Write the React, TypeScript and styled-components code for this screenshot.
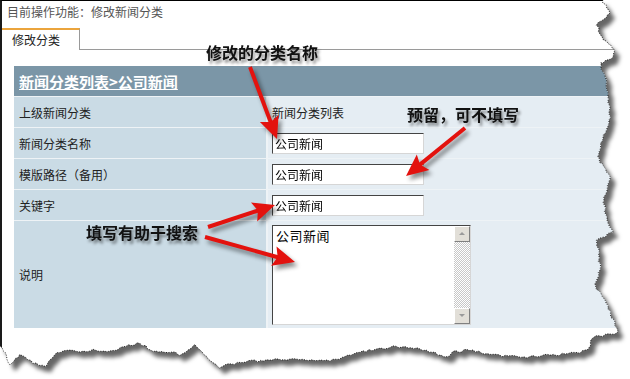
import styled, { createGlobalStyle } from "styled-components";

const GlobalStyle = createGlobalStyle`
  html, body {
    margin: 0;
    padding: 0;
    background: #fff;
  }
  body {
    width: 630px;
    height: 379px;
    overflow: hidden;
    font-family: "Noto Sans CJK SC", "Noto Sans", sans-serif;
  }
`;

// rough outline of the torn right and bottom edges
const TEAR: [number, number][] = [
  [602, 0], [610, 13], [597, 25], [602, 37], [615, 50], [613, 57], [600, 63],
  [605, 77], [608, 90], [610, 117], [604, 135], [597, 157], [603, 167],
  [610, 177], [603, 200], [607, 223], [613, 232], [597, 240], [600, 270],
  [595, 287], [607, 303], [613, 320], [618, 333], [593, 337], [588, 350],
  [577, 353], [527, 357], [493, 355], [467, 350], [453, 352], [447, 357],
  [417, 348], [393, 347], [360, 352], [330, 361], [290, 359], [240, 362],
  [220, 367], [213, 363], [200, 350], [195, 345], [180, 355], [173, 352],
  [153, 352], [140, 343], [123, 347], [110, 352], [90, 350], [80, 353],
  [67, 350], [57, 353], [45, 367], [33, 363], [20, 355], [10, 365],
  [5, 353], [0, 346],
];

function roughen(pts: [number, number][]) {
  const out: [number, number][] = [];
  let k = 0;
  for (let i = 0; i < pts.length - 1; i++) {
    const [x1, y1] = pts[i];
    const [x2, y2] = pts[i + 1];
    const steps = Math.max(1, Math.round(Math.hypot(x2 - x1, y2 - y1) / 3));
    for (let s = 0; s < steps; s++) {
      const t = s / steps;
      const n = Math.sin(k * 12.9898) * 43758.5453;
      const j = (n - Math.floor(n) - 0.5) * 2.4;
      const dx = x2 - x1;
      const dy = y2 - y1;
      const len = Math.hypot(dx, dy) || 1;
      out.push([x1 + dx * t + (-dy / len) * j, y1 + dy * t + (dx / len) * j]);
      k++;
    }
  }
  out.push(pts[pts.length - 1]);
  return out;
}

const EDGE = roughen(TEAR);
const CLIP = `polygon(0px 0px, ${EDGE.map(([x, y]) => `${x.toFixed(1)}px ${y.toFixed(1)}px`).join(", ")})`;
const EDGE_LINE = EDGE.map(([x, y]) => `${x.toFixed(1)},${y.toFixed(1)}`).join(" ");

const Stage = styled.div`
  position: relative;
  width: 630px;
  height: 379px;
`;

const ShadowWrap = styled.div`
  filter: drop-shadow(5px 6px 2px rgba(0, 0, 0, 0.6));
`;

const Paper = styled.div`
  width: 630px;
  height: 379px;
  box-sizing: border-box;
  background: #fff;
  border-top: 1px solid #000;
  border-left: 2px solid #1a1a1a;
  clip-path: ${CLIP};
`;

const Title = styled.div`
  padding: 5px 0 0 5px;
  height: 22px;
  box-sizing: border-box;
  font-size: 12px;
  line-height: 12px;
  color: #555;
`;

const TabBar = styled.div`
  display: flex;
  align-items: stretch;
  margin-top: 5px;
  height: 22px;
`;

const Tab = styled.div`
  width: 78px;
  box-sizing: border-box;
  border-top: 2px solid #eba43c;
  border-right: 1px solid #999;
  padding-left: 10px;
  font-size: 12px;
  line-height: 19px;
  color: #222;
`;

const TabFill = styled.div`
  flex: 1;
  border-bottom: 1px solid #9a9a9a;
`;

const Table = styled.div`
  display: grid;
  grid-template-columns: 252px 1fr;
  grid-template-rows: 30px repeat(4, 30px) 107px;
  column-gap: 2px;
  row-gap: 1px;
  width: 604px;
  margin: 16px 0 0 12px;
  background: #eef3f6;
`;

const Header = styled.div`
  grid-column: 1 / span 2;
  background: #7b96a7;
  padding-left: 5px;
  display: flex;
  align-items: center;
  font-size: 15px;
  font-weight: bold;
  color: #fff;
  text-decoration: underline;
`;

const Label = styled.div`
  background: #cadbe5;
  padding-left: 5px;
  display: flex;
  align-items: center;
  font-size: 12px;
  color: #222;
`;

const Value = styled.div`
  background: #e5edf3;
  padding-left: 4px;
  display: flex;
  align-items: center;
  font-size: 12px;
  color: #222;
`;

const Input = styled.input`
  width: 152px;
  height: 21px;
  box-sizing: border-box;
  margin: 0;
  padding: 1px 2px 0;
  border: 1px solid;
  border-color: #444 #d6d6d6 #d6d6d6 #444;
  background: #fff;
  font-family: "Noto Sans CJK SC", sans-serif;
  font-size: 12px;
  color: #000;
  outline: none;
`;

const TextBox = styled.div`
  display: flex;
  width: 199px;
  height: 100px;
  box-sizing: border-box;
  border: 1px solid;
  border-color: #444 #d6d6d6 #d6d6d6 #444;
  background: #fff;
`;

const TextContent = styled.div`
  flex: 1;
  padding: 2px 3px;
  font-size: 13px;
  line-height: 16px;
  letter-spacing: 0.5px;
  color: #000;
`;

const ScrollBar = styled.div`
  width: 16px;
  display: flex;
  flex-direction: column;
`;

const ScrollTrack = styled.div`
  flex: 1;
  background-color: #fff;
  background-image: repeating-conic-gradient(#c8c8c8 0 25%, #fff 0 50%);
  background-size: 2px 2px;
`;

const ScrollBtn = styled.div<{ $down?: boolean }>`
  width: 16px;
  height: 16px;
  box-sizing: border-box;
  background: #e2dfd8;
  border: 1px solid;
  border-color: #fff #808080 #808080 #fff;
  display: flex;
  align-items: center;
  justify-content: center;

  &::after {
    content: "";
    width: 0;
    height: 0;
    border-left: 3px solid transparent;
    border-right: 3px solid transparent;
    ${(p) =>
      p.$down ? "border-top: 3px solid #9a9a9a;" : "border-bottom: 3px solid #9a9a9a;"}
  }
`;

const Overlay = styled.svg`
  position: absolute;
  left: 0;
  top: 0;
  pointer-events: none;
`;

const ArrowLayer = styled.svg`
  position: absolute;
  left: 0;
  top: 0;
  pointer-events: none;
  filter: drop-shadow(3px 4px 2px rgba(0, 0, 0, 0.45));
`;

const Note = styled.div<{ $x: number; $y: number }>`
  position: absolute;
  left: ${(p) => p.$x}px;
  top: ${(p) => p.$y}px;
  font-size: 16px;
  line-height: 18px;
  font-weight: bold;
  color: #111;
  white-space: nowrap;
  text-shadow: 2px 3px 3px rgba(0, 0, 0, 0.45);
`;

function Arrow({ from, to }: { from: [number, number]; to: [number, number] }) {
  const [x1, y1] = from;
  const [x2, y2] = to;
  const dx = x2 - x1;
  const dy = y2 - y1;
  const len = Math.hypot(dx, dy);
  const ux = dx / len;
  const uy = dy / len;
  const headLen = 22;
  const headW = 10;
  const bx = x2 - ux * headLen;
  const by = y2 - uy * headLen;
  const px = -uy;
  const py = ux;
  const head = [
    [x2, y2],
    [bx + px * headW, by + py * headW],
    [bx + ux * 4, by + uy * 4],
    [bx - px * headW, by - py * headW],
  ]
    .map(([a, b]) => `${a.toFixed(1)},${b.toFixed(1)}`)
    .join(" ");
  return (
    <g>
      <line x1={x1} y1={y1} x2={bx + ux * 6} y2={by + uy * 6} stroke="#e3120e" strokeWidth={4} />
      <polygon points={head} fill="#e3120e" />
    </g>
  );
}

export default function App() {
  return (
    <Stage>
      <GlobalStyle />
      <ShadowWrap>
        <Paper>
          <Title>目前操作功能：修改新闻分类</Title>
          <TabBar>
            <Tab>修改分类</Tab>
            <TabFill />
          </TabBar>
          <Table>
            <Header>新闻分类列表&gt;公司新闻</Header>
            <Label>上级新闻分类</Label>
            <Value>新闻分类列表</Value>
            <Label>新闻分类名称</Label>
            <Value>
              <Input defaultValue="公司新闻" />
            </Value>
            <Label>模版路径（备用）</Label>
            <Value>
              <Input defaultValue="公司新闻" />
            </Value>
            <Label>关键字</Label>
            <Value>
              <Input defaultValue="公司新闻" />
            </Value>
            <Label>说明</Label>
            <Value>
              <TextBox>
                <TextContent>公司新闻</TextContent>
                <ScrollBar>
                  <ScrollBtn />
                  <ScrollTrack />
                  <ScrollBtn $down />
                </ScrollBar>
              </TextBox>
            </Value>
          </Table>
        </Paper>
      </ShadowWrap>

      <Overlay width={630} height={379}>
        <polyline
          points={EDGE_LINE}
          fill="none"
          stroke="#000"
          strokeWidth={0.8}
          strokeDasharray="1 1.5"
        />
      </Overlay>

      <ArrowLayer width={630} height={379}>
        <Arrow from={[250, 67]} to={[277, 139]} />
        <Arrow from={[465, 128]} to={[406, 176]} />
        <Arrow from={[208, 227]} to={[275, 205]} />
        <Arrow from={[205, 237]} to={[295, 262]} />
      </ArrowLayer>

      <Note $x={206} $y={43}>修改的分类名称</Note>
      <Note $x={407} $y={105}>预留，可不填写</Note>
      <Note $x={86} $y={223}>填写有助于搜索</Note>
    </Stage>
  );
}
